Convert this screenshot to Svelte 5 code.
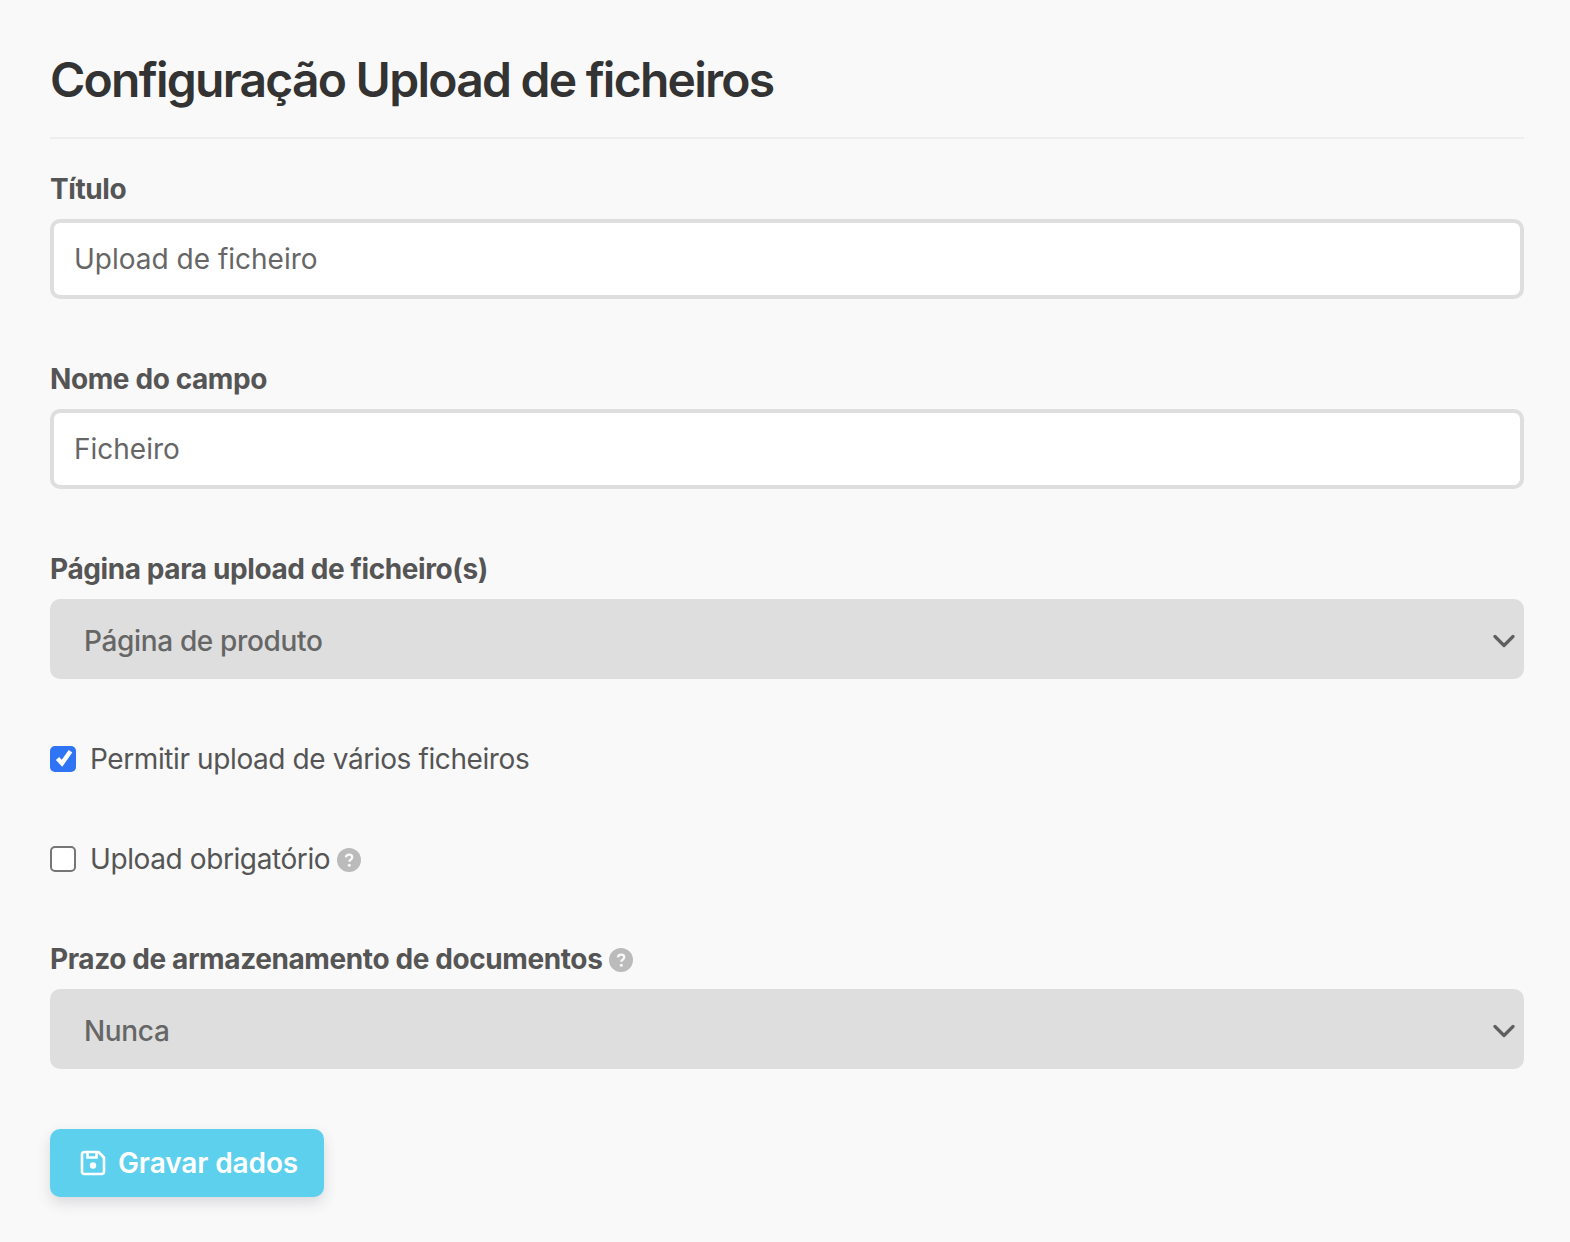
<script lang="ts">
	let title = $state('Upload de ficheiro');
	let fieldName = $state('Ficheiro');
	let page = $state('Página de produto');
	let storage = $state('Nunca');
	let multiple = $state(true);
	let required = $state(false);
</script>

{#snippet help()}
	<svg class="help" viewBox="0 0 24 24" aria-hidden="true">
		<circle cx="12" cy="12" r="12" fill="#bbb" />
		<path d="M8.900 9.400c.2-1.700 1.500-2.700 3.200-2.700 1.800 0 3.100 1.100 3.100 2.600 0 1.200-.6 1.800-1.600 2.500-.9.600-1.200 1-1.200 1.900" fill="none" stroke="#fafafa" stroke-width="2.300" />
		<circle cx="12.300" cy="17.300" r="1.500" fill="#fafafa" />
	</svg>
{/snippet}

{#snippet chevron()}
	<svg class="chevron" viewBox="0 0 22 14" aria-hidden="true">
		<path d="M2 2.500l9 9 9-9" fill="none" stroke="#5f5f5f" stroke-width="3.200" stroke-linecap="round" stroke-linejoin="round" />
	</svg>
{/snippet}

<div class="page">
	<h1>Configuração Upload de ficheiros</h1>

	<div class="field first">
		<label for="title">Título</label>
		<input id="title" type="text" bind:value={title} />
	</div>

	<div class="field">
		<label for="name">Nome do campo</label>
		<input id="name" type="text" bind:value={fieldName} />
	</div>

	<div class="field">
		<label for="page">Página para upload de ficheiro(s)</label>
		<div class="select-wrap">
			<select id="page" bind:value={page}>
				<option>Página de produto</option>
				<option>Página de checkout</option>
			</select>
			{@render chevron()}
		</div>
	</div>

	<label class="check-row multiple">
		<input type="checkbox" bind:checked={multiple} />
		<span class="box">
			{#if multiple}
				<svg viewBox="0 0 26 26" aria-hidden="true">
					<path d="M7.500 12.500l4.500 4.800 8.500-12" fill="none" stroke="#fff" stroke-width="4.400" />
				</svg>
			{/if}
		</span>
		Permitir upload de vários ficheiros
	</label>

	<label class="check-row required">
		<input type="checkbox" bind:checked={required} />
		<span class="box"></span>
		Upload obrigatório
		{@render help()}
	</label>

	<div class="field storage">
		<label for="storage">Prazo de armazenamento de documentos {@render help()}</label>
		<div class="select-wrap">
			<select id="storage" bind:value={storage}>
				<option>Nunca</option>
				<option>30 dias</option>
			</select>
			{@render chevron()}
		</div>
	</div>

	<button class="save">
		<svg viewBox="0 0 26 26" aria-hidden="true">
			<path d="M4.500 2h14L24 7.500v14a2.500 2.500 0 0 1-2.500 2.500h-17A2.500 2.500 0 0 1 2 21.500v-17A2.500 2.500 0 0 1 4.500 2z" fill="none" stroke="#fff" stroke-width="2.600" stroke-linejoin="round" />
			<path d="M7.500 2v5.500h9V2" fill="none" stroke="#fff" stroke-width="2.600" />
			<circle cx="13" cy="15.500" r="3.200" fill="#fff" />
		</svg>
		Gravar dados
	</button>
</div>

<style>
	:global(body) {
		background: #f9f9f9;
		font-family: Inter, 'Liberation Sans', sans-serif;
	}

	.page {
		padding: 51px 46px 45px 50px;
		color: #555;
	}

	h1 {
		margin: 0;
		padding-bottom: 28px;
		border-bottom: 2px solid #eeeeee;
		font-size: 48px;
		line-height: 58px;
		font-weight: 600;
		letter-spacing: -1.75px;
		color: #333;
	}

	.field {
		margin-top: 60px;
	}

	.field.first {
		margin-top: 30px;
	}

	.field label {
		display: flex;
		align-items: center;
		gap: 7px;
		height: 40px;
		margin-bottom: 10px;
		font-size: 28px;
		font-weight: 700;
		letter-spacing: -0.4px;
		color: #555;
	}

	input[type='text'] {
		display: block;
		box-sizing: border-box;
		width: 100%;
		height: 80px;
		padding: 0 20px;
		border: 4px solid #dedede;
		border-radius: 10px;
		background: #fff;
		font: 400 28px Inter, sans-serif;
		color: #666;
		outline: none;
	}

	.select-wrap {
		position: relative;
	}

	select {
		display: block;
		width: 100%;
		height: 80px;
		padding: 4px 34px 0;
		border: none;
		border-radius: 10px;
		background: #dedede;
		font: 500 28px Inter, sans-serif;
		letter-spacing: -0.35px;
		color: #666;
		appearance: none;
	}

	.chevron {
		position: absolute;
		right: 9px;
		top: 35px;
		width: 22px;
		height: 14px;
		pointer-events: none;
	}

	.check-row {
		display: flex;
		align-items: center;
		height: 40px;
		font-size: 28px;
		letter-spacing: -0.4px;
		color: #555;
	}

	.check-row input {
		position: absolute;
		opacity: 0;
		width: 0;
		height: 0;
	}

	.check-row.multiple {
		margin-top: 60px;
	}

	.check-row.required {
		margin-top: 60px;
	}

	.box {
		box-sizing: border-box;
		flex: none;
		width: 26px;
		height: 26px;
		margin-right: 14px;
		border: 2px solid #767676;
		border-radius: 5px;
		background: #fff;
	}

	.box svg {
		display: block;
		width: 26px;
		height: 26px;
	}

	.multiple .box {
		border: none;
		background: #2f74f5;
	}

	.help {
		flex: none;
		width: 24px;
		height: 24px;
		margin-top: 2px;
	}

	.required .help {
		margin-left: 7px;
	}

	.storage {
		margin-top: 60px;
	}

	.save {
		display: flex;
		align-items: center;
		gap: 12px;
		height: 68px;
		margin-top: 60px;
		padding: 0 26px 0 30px;
		border: none;
		border-radius: 10px;
		background: #5cd0ed;
		color: #fff;
		font: 600 28px Inter, sans-serif;
		letter-spacing: -0.1px;
		box-shadow: 0 6px 14px rgba(60, 60, 90, 0.16);
	}

	.save svg {
		width: 26px;
		height: 26px;
	}
</style>
